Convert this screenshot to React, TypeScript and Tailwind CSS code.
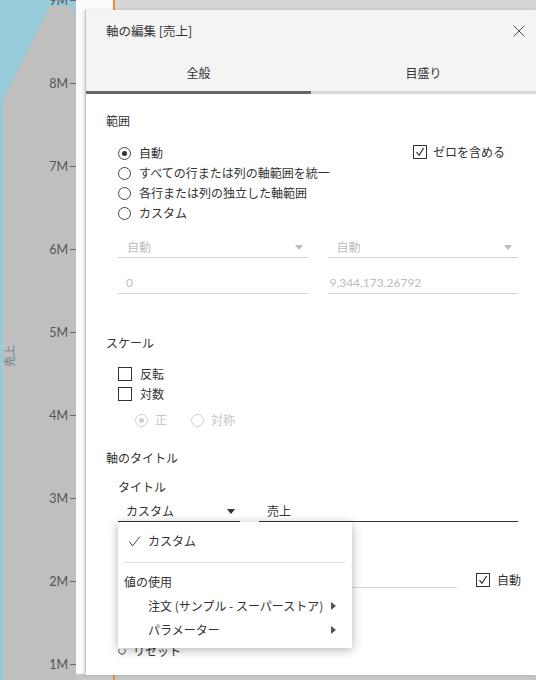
import { ReactNode } from "react";

const ticks = [9, 8, 7, 6, 5, 4, 3, 2, 1];

function ChartAxis() {
  return (
    <svg width="76" height="680" viewBox="0 0 76 680" className="shrink-0 block">
      <rect x="0" y="0" width="76" height="680" fill="#96cbd9" />
      <polygon points="50,6 72,6 76,18 76,680 3,680 3,100" fill="#bfbfbf" />
      <text
        x="0"
        y="0"
        transform="translate(14 356) rotate(-90)"
        textAnchor="middle"
        fontSize="11"
        fill="#6f7f86"
        fontFamily="'Noto Sans CJK JP', sans-serif"
      >
        売上
      </text>
      {ticks.map((t) => {
        const y = 83 * (9 - t);
        return (
          <g key={t}>
            <text
              x="68"
              y={y + 4.5}
              textAnchor="end"
              fontSize="12.5"
              fill="#555"
              fontFamily="Lato, 'Noto Sans', sans-serif"
            >
              {t}M
            </text>
            <line x1="70" y1={y + 0.5} x2="76" y2={y + 0.5} stroke="#666" strokeWidth="1" />
          </g>
        );
      })}
    </svg>
  );
}

function Radio({ on, disabled }: { on?: boolean; disabled?: boolean }) {
  const c = disabled ? "border-[#cfcfcf]" : "border-[#444]";
  return (
    <span className={`w-[13px] h-[13px] rounded-full border ${c} bg-white flex items-center justify-center shrink-0`}>
      {on && <span className={`w-[5px] h-[5px] rounded-full ${disabled ? "bg-[#cfcfcf]" : "bg-[#333]"}`} />}
    </span>
  );
}

function Check({ on }: { on?: boolean }) {
  return (
    <span className="w-[14px] h-[14px] border border-[#333] bg-white flex items-center justify-center shrink-0">
      {on && (
        <svg width="10" height="10" viewBox="0 0 10 10">
          <path d="M1.5 5.2 L4 8.3 L8.6 1.2" fill="none" stroke="#333" strokeWidth="1.2" />
        </svg>
      )}
    </span>
  );
}

function Caret({ color = "#333" }: { color?: string }) {
  return (
    <svg width="8" height="5" viewBox="0 0 8 5" className="shrink-0">
      <path d="M0 0 L8 0 L4 5 Z" fill={color} />
    </svg>
  );
}

function SubArrow() {
  return (
    <svg width="5" height="8" viewBox="0 0 5 8" className="shrink-0">
      <path d="M0 0 L5 4 L0 8 Z" fill="#555" />
    </svg>
  );
}

function Row({ children, className = "" }: { children: ReactNode; className?: string }) {
  return <div className={`h-[20px] flex items-center gap-[8px] whitespace-nowrap ${className}`}>{children}</div>;
}

function Menu() {
  return (
    <div className="absolute left-[32px] top-[512px] w-[234px] h-[126px] bg-white shadow-[0_2px_10px_rgba(0,0,0,0.3)] pt-[8px] text-[#333] whitespace-nowrap">
      <div className="h-[22px] flex items-center pl-[11px]">
        <svg width="12" height="11" viewBox="0 0 12 11" className="shrink-0">
          <path d="M0.5 5.5 L3.5 10 L11 0.5" fill="none" stroke="#444" strokeWidth="1" />
        </svg>
        <span className="ml-[7px]">カスタム</span>
      </div>
      <div className="mt-[10px] ml-[6px] mr-[7px] h-px bg-[#dedede]" />
      <div className="mt-[7px] h-[24px] flex items-center pl-[6px]">値の使用</div>
      <div className="h-[24px] flex items-center pl-[30px] pr-[16px]">
        <span className="flex-1">注文 (サンプル - スーパーストア)</span>
        <SubArrow />
      </div>
      <div className="h-[24px] flex items-center pl-[30px] pr-[16px]">
        <span className="flex-1">パラメーター</span>
        <SubArrow />
      </div>
    </div>
  );
}

function Dialog() {
  return (
    <div className="absolute left-[85px] top-[10px] w-[451px] h-[665px] bg-white border-l border-[#c4c4c4] shadow-[-1px_0_3px_rgba(0,0,0,0.15)] text-[12px] text-[#333] font-['Noto_Sans_CJK_JP','Noto_Sans',sans-serif]">
      <div className="bg-[#f4f4f4]">
        <div className="h-[42px] flex items-center justify-between pl-[20px] pr-[11px]">
          <span className="text-[12.5px]">軸の編集 [売上]</span>
          <svg width="12" height="12" viewBox="0 0 12 12">
            <path d="M0.5 0.5 L11.5 11.5 M11.5 0.5 L0.5 11.5" stroke="#555" strokeWidth="1" />
          </svg>
        </div>
        <div className="h-[39px] pt-[3px] flex">
          <div className="flex-1 flex items-center justify-center">全般</div>
          <div className="flex-1 flex items-center justify-center">目盛り</div>
        </div>
        <div className="h-[3px] flex">
          <div className="flex-1 bg-[#666]" />
          <div className="flex-1 bg-[#dadada]" />
        </div>
      </div>

      <div className="pl-[20px] pr-[18px] leading-[18px]">
        <div className="mt-[18px] h-[18px]">範囲</div>

        <div className="mt-[13px] flex pl-[12px]">
          <div className="flex flex-col">
            <Row><Radio on /><span>自動</span></Row>
            <Row><Radio /><span>すべての行または列の軸範囲を統一</span></Row>
            <Row><Radio /><span>各行または列の独立した軸範囲</span></Row>
            <Row><Radio /><span>カスタム</span></Row>
          </div>
          <div className="ml-auto mr-[13px] mt-[2px] h-[14px] flex items-center gap-[6px] whitespace-nowrap">
            <Check on />
            <span>ゼロを含める</span>
          </div>
        </div>

        <div className="mt-[14px] ml-[12px] grid grid-cols-2 gap-x-[19px] text-[#bdbdbd]">
          <div className="h-[21px] border-b border-[#d6d6d6] flex items-center justify-between pl-[9px] pr-[6px]">
            <span>自動</span>
            <Caret color="#bdbdbd" />
          </div>
          <div className="h-[21px] border-b border-[#d6d6d6] flex items-center justify-between pl-[9px] pr-[6px]">
            <span>自動</span>
            <Caret color="#bdbdbd" />
          </div>
          <div className="mt-[15px] h-[21px] border-b border-[#d6d6d6] flex items-center pl-[8px] font-['Lato',sans-serif]">
            0
          </div>
          <div className="mt-[15px] h-[21px] border-b border-[#d6d6d6] flex items-center pl-[2px] font-['Lato',sans-serif]">
            9,344,173.26792
          </div>
        </div>

        <div className="mt-[40px] h-[18px]">スケール</div>
        <div className="mt-[12px] pl-[12px]">
          <Row><Check /><span>反転</span></Row>
          <Row><Check /><span>対数</span></Row>
        </div>
        <div className="mt-[6px] pl-[29px] h-[20px] flex items-center text-[#c4c4c4] whitespace-nowrap">
          <Radio on disabled />
          <span className="ml-[7px]">正</span>
          <span className="ml-[24px]"><Radio disabled /></span>
          <span className="ml-[7px]">対称</span>
        </div>

        <div className="mt-[19px] h-[18px]">軸のタイトル</div>
        <div className="mt-[11px] ml-[12px] h-[18px]">タイトル</div>
        <div className="mt-[5px] ml-[12px] flex gap-x-[19px]">
          <div className="w-[122px] h-[21px] border-b border-[#333] flex items-center justify-between pl-[8px] pr-[5px]">
            <span>カスタム</span>
            <Caret />
          </div>
          <div className="flex-1 h-[21px] border-b border-[#333] flex items-center pl-[8px]">売上</div>
        </div>

        <div className="mt-[45px] ml-[12px] flex items-end whitespace-nowrap">
          <div className="w-[339px] shrink-0 h-[21px] border-b border-[#d6d6d6]" />
          <div className="ml-[19px] shrink-0 h-[14px] mb-[1px] flex items-center gap-[7px]">
            <Check on />
            <span>自動</span>
          </div>
        </div>

        <div className="mt-[53px] ml-[12px] h-[20px] flex items-center gap-[7px]">
          <svg width="8" height="8" viewBox="0 0 8 8" className="shrink-0">
            <path d="M6.8 2.2 A3.3 3.3 0 1 1 1.2 2.2" fill="none" stroke="#444" strokeWidth="1" />
          </svg>
          <span>リセット</span>
        </div>
      </div>

      <Menu />
    </div>
  );
}

export default function App() {
  return (
    <div className="w-[536px] h-[680px] relative overflow-hidden flex bg-[#bfbfbf]">
      <ChartAxis />
      <div className="flex-1 flex flex-col">
        <div className="flex-1 flex">
          <div className="w-[37px] bg-[#fbfbfb]" />
          <div className="w-[2px] bg-[#ee8e2e]" />
          <div className="flex-1 bg-[#d6d6d6] border-b border-[#bdbdbd]" />
        </div>
        <div className="h-[6px] flex">
          <div className="w-[37px] bg-[#c6c6c6]" />
          <div className="w-[2px] bg-[#ee8e2e]" />
          <div className="flex-1 bg-[#c6c6c6]" />
        </div>
      </div>
      <Dialog />
    </div>
  );
}
